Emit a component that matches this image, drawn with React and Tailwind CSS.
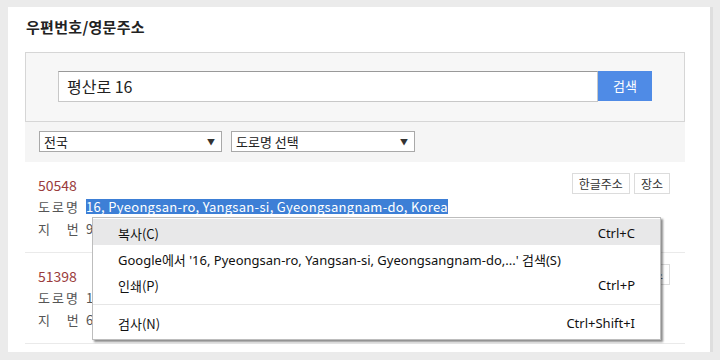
export default function App() {
  const kr = { fontFamily: '"Noto Sans CJK KR", "Noto Sans", sans-serif' };
  const menuFont = { fontFamily: '"Noto Sans", "Noto Sans CJK KR", sans-serif' };
  const Row = ({ code, road, jibun, selected }) => (
    <div className="flex border-b border-[#eaeaea] pl-[13px] pr-[15px] pt-[12px] h-[91px]">
      <div className="flex-1 text-[13px] text-[#555] leading-[22px]">
        <div className="text-[#9a3c3c] text-[14px]">{code}</div>
        <div className="flex">
          <span className="w-[48px] shrink-0 tracking-[2px]">도로명</span>
          {selected ? (
            <span className="bg-[#3d7fd6] text-white h-[15px] leading-[15px] mt-[3px] tracking-[0.3px]">{road}</span>
          ) : (
            <span>{road}</span>
          )}
        </div>
        <div className="flex">
          <span className="w-[48px] shrink-0 tracking-[2px]">지&nbsp;&nbsp;&nbsp;번</span>
          <span>{jibun}</span>
        </div>
      </div>
      <div className="flex gap-[4px] h-[21px] mt-[-1px]">
        <div className="border border-[#dcdcdc] bg-white px-[6px] text-[12px] text-[#333] leading-[19px]">한글주소</div>
        <div className="border border-[#dcdcdc] bg-white px-[6px] text-[12px] text-[#333] leading-[19px]">장소</div>
      </div>
    </div>
  );
  return (
    <div className="w-[720px] h-[360px] bg-[#ebebeb] pt-[7px] pl-[8px] relative overflow-hidden" style={kr}>
      <div className="w-[705px] h-[345px] bg-white border-r-[3px] border-[#dedede] pl-[17px]">
        <div className="pt-[9px] pl-[1px] text-[15px] font-bold text-[#222] h-[45px] tracking-[0.3px]">우편번호/영문주소</div>
        <div className="w-[660px] h-[70px] bg-[#f7f7f7] border border-[#d6d6d6] pl-[32px] pt-[18px] flex">
          <div className="w-[540px] h-[31px] bg-white border border-[#c8c8c8] border-t-[#999] pl-[8px] text-[16px] text-[#222] leading-[29px]">평산로 16</div>
          <div className="w-[54px] h-[30px] bg-[#4f8be6] text-white text-[13px] flex items-center justify-center">검색</div>
        </div>
        <div className="w-[660px] h-[40px] bg-[#f5f5f5] flex gap-[9px] pl-[14px] pt-[9px]">
          <div className="w-[183px] h-[21px] bg-white border border-[#a9a9a9] flex items-center justify-between pl-[4px] pr-[6px] text-[13px] text-[#222]">
            <span>전국</span><span className="text-[8px] text-[#333]">▼</span>
          </div>
          <div className="w-[184px] h-[21px] bg-white border border-[#a9a9a9] flex items-center justify-between pl-[4px] pr-[6px] text-[13px] text-[#222]">
            <span>도로명 선택</span><span className="text-[8px] text-[#333]">▼</span>
          </div>
        </div>
        <div className="w-[660px]">
          <Row code="50548" selected road="16, Pyeongsan-ro, Yangsan-si, Gyeongsangnam-do, Korea" jibun="983-1" />
          <Row code="51398" road="16" jibun="61-2" />
        </div>
      </div>
      <div className="absolute left-[92px] top-[217px] w-[569px] bg-white border border-[#bdbdbd] shadow-[2px_2px_2px_rgba(0,0,0,0.45)] pt-[1px] pb-[2px] text-[13px] text-[#111]" style={menuFont}>
        <div className="h-[26px] bg-[#e8e8e9] flex items-center justify-between pl-[25px] pr-[25px] pt-[4px]">
          <span style={kr}>복사(C)</span><span>Ctrl+C</span>
        </div>
        <div className="h-[26px] flex items-center pl-[25px] pr-[25px] pt-[4px]">
          <span>Google<span style={kr}>에서</span> '16, Pyeongsan-ro, Yangsan-si, Gyeongsangnam-do,...' <span style={kr}>검색</span>(S)</span>
        </div>
        <div className="h-[26px] flex items-center justify-between pl-[25px] pr-[25px] pt-[4px]">
          <span style={kr}>인쇄(P)</span><span>Ctrl+P</span>
        </div>
        <div className="h-[14px] flex items-center"><div className="w-full h-px bg-[#e6e6e6]"></div></div>
        <div className="h-[26px] flex items-center justify-between pl-[25px] pr-[25px]">
          <span style={kr}>검사(N)</span><span>Ctrl+Shift+I</span>
        </div>
      </div>
    </div>
  );
}
